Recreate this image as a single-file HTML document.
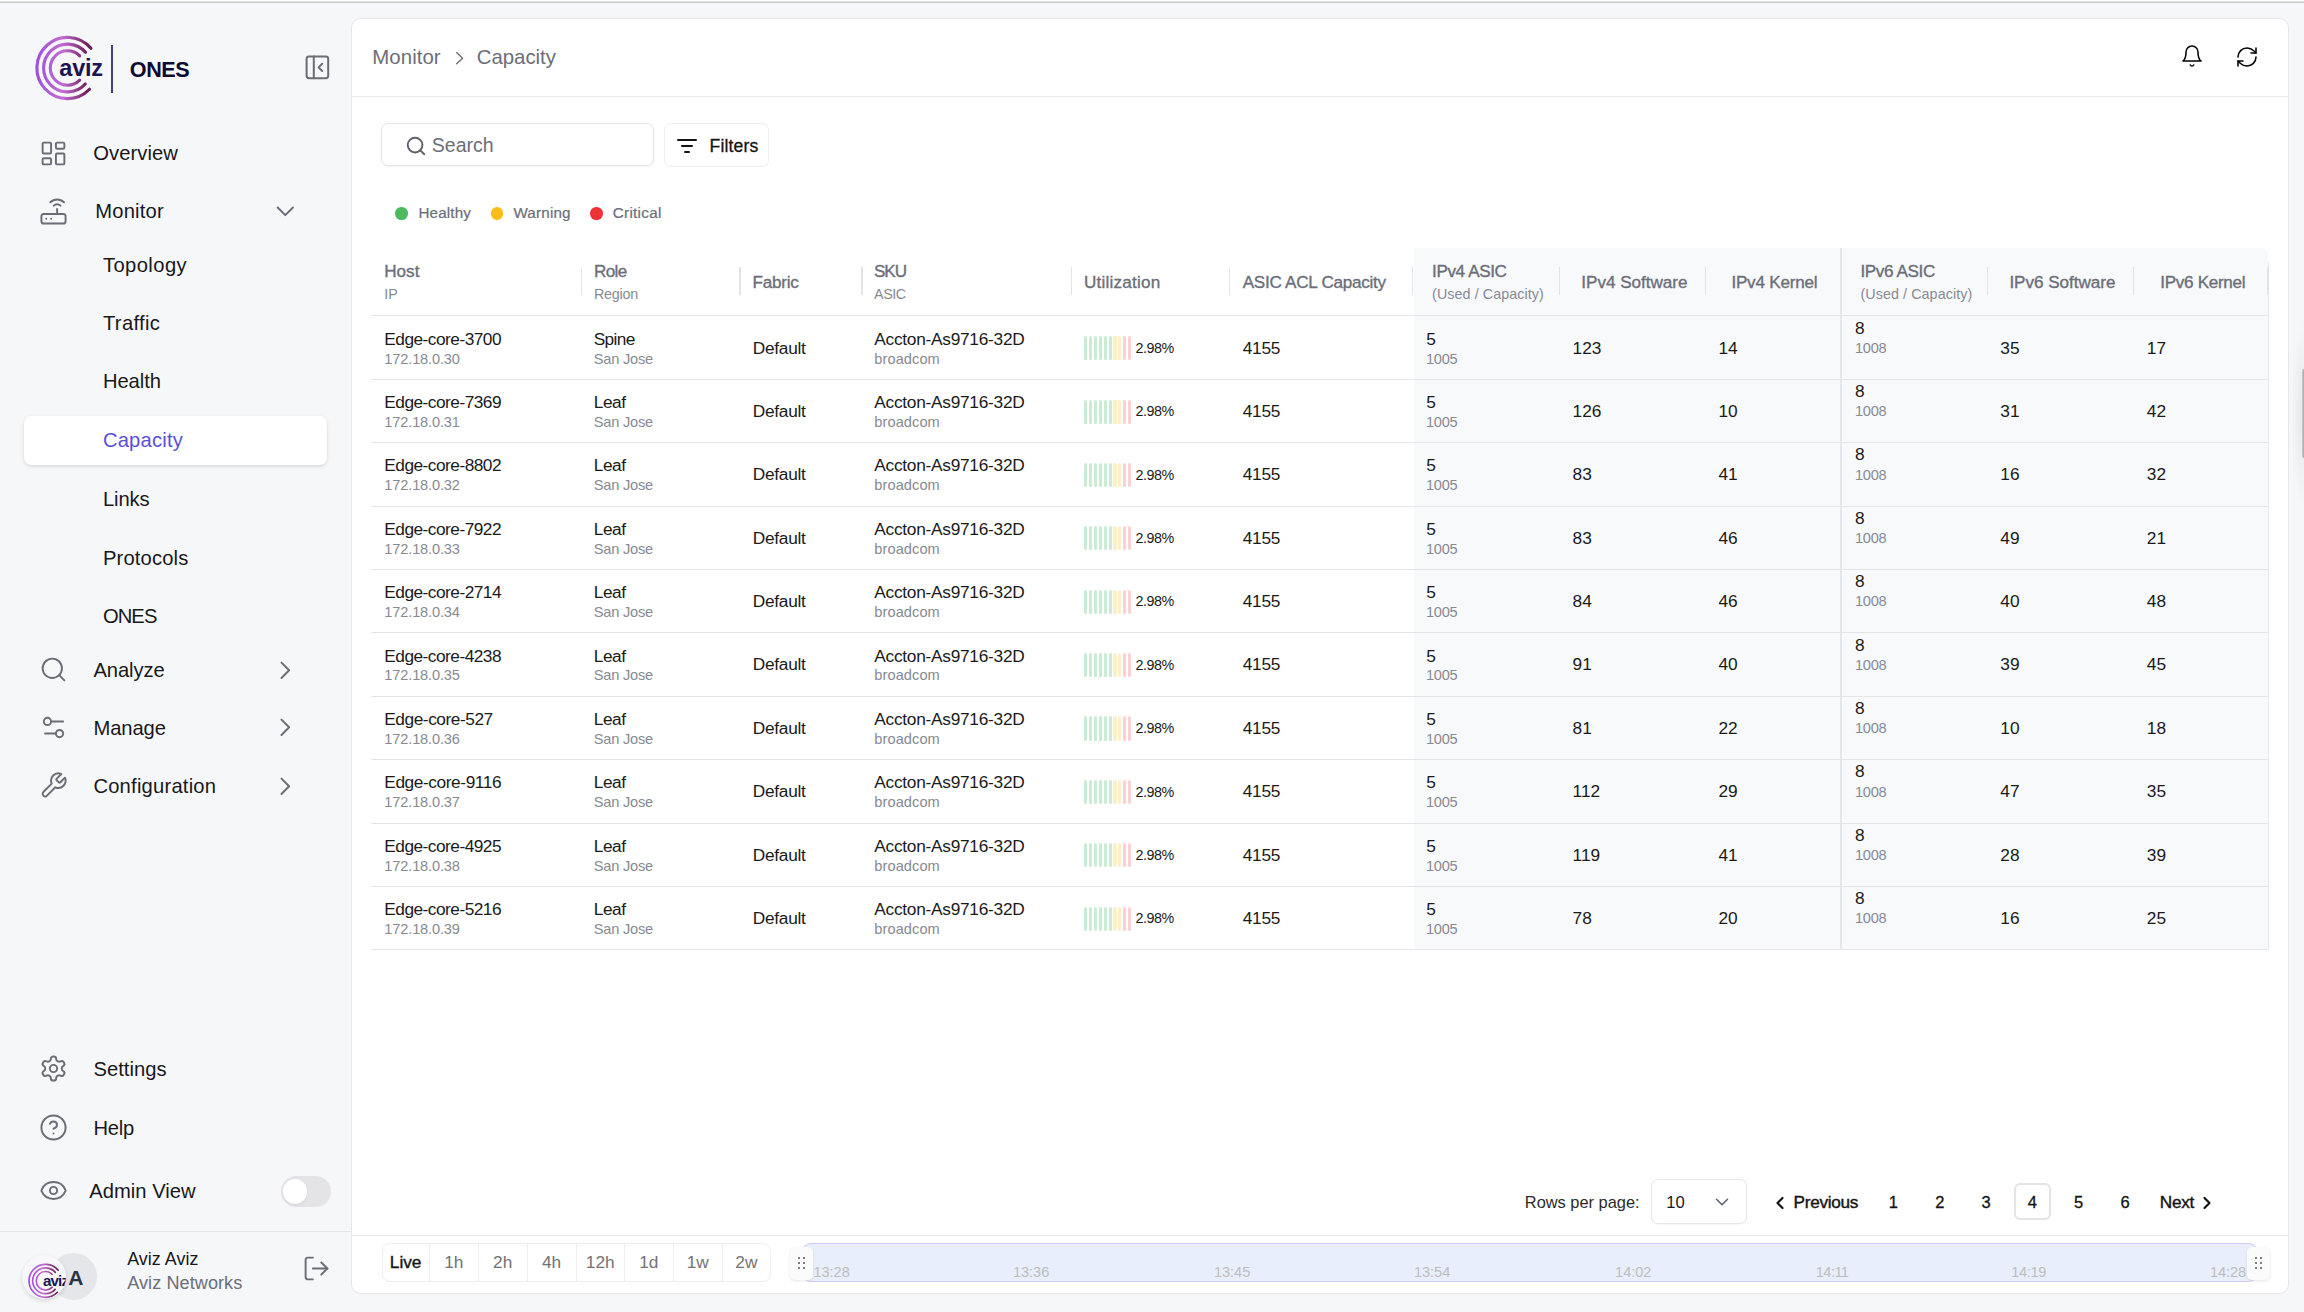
<!DOCTYPE html>
<html><head><meta charset="utf-8"><title>Monitor - Capacity</title>
<style>
html,body{margin:0;padding:0}
body{width:2304px;height:1312px;overflow:hidden;position:relative;background:#f6f7f9;font-family:"Liberation Sans", sans-serif}
.t{position:absolute;white-space:nowrap;line-height:1;font-family:"Liberation Sans", sans-serif}
</style></head><body>
<div style="position:absolute;left:0.00px;top:0.00px;width:2304.00px;height:1.00px;background:#fff"></div>
<div style="position:absolute;left:0.00px;top:1.00px;width:2304.00px;height:1.00px;background:#e4e5e5"></div>
<div style="position:absolute;left:0.00px;top:2.00px;width:2304.00px;height:1.00px;background:#c8cac9"></div>
<svg style="position:absolute;left:35px;top:35px;width:66px;height:66px;overflow:visible" viewBox="0 0 66 66"><defs><linearGradient id="lg1" x1="0" y1="0" x2="66" y2="0" gradientUnits="userSpaceOnUse"><stop offset="0" stop-color="#9a4ee2"/><stop offset="0.42" stop-color="#c36cd2"/><stop offset="0.78" stop-color="#72205f"/><stop offset="1" stop-color="#4a0c3a"/></linearGradient></defs><g fill="none" stroke="url(#lg1)" stroke-width="3.1" stroke-linecap="round"><path d="M55.94 13.33A30.6 30.6 0 1 0 54.51 54.26"/><path d="M50.54 17.32A23.9 23.9 0 1 0 50.26 48.99"/><path d="M44.66 20.84A17.2 17.2 0 1 0 44.66 45.16"/></g><text x="24.3" y="40.8" font-family="Liberation Sans, sans-serif" font-weight="700" font-size="23.5" letter-spacing="-0.2" fill="#1d1553">aviz</text></svg>
<div style="position:absolute;left:110.90px;top:45.00px;width:1.80px;height:48.00px;background:#433f80"></div>
<div class="t" style="left:129.8px;top:59px;font-size:21.6px;color:#0c0b30;font-weight:700;letter-spacing:-0.438px;">ONES</div>
<svg style="position:absolute;left:302.70px;top:53.40px;width:28.8px;height:28.8px" viewBox="0 0 24 24" fill="none" stroke="#6b6d76" stroke-width="1.67" stroke-linecap="round" stroke-linejoin="round"><rect width="18" height="18" x="3" y="3" rx="2"/><path d="M9 3v18"/><path d="m16 15-3-3 3-3"/></svg>
<svg style="position:absolute;left:39.00px;top:138.80px;width:29px;height:29px" viewBox="0 0 24 24" fill="none" stroke="#6b6d76" stroke-width="1.6" stroke-linecap="round" stroke-linejoin="round"><rect width="7" height="9" x="3" y="3" rx="1"/><rect width="7" height="5" x="14" y="3" rx="1"/><rect width="7" height="9" x="14" y="12" rx="1"/><rect width="7" height="5" x="3" y="16" rx="1"/></svg>
<div class="t" style="left:93.3px;top:143px;font-size:20.2px;color:#18181b;font-weight:400;letter-spacing:0.052px;">Overview</div>
<svg style="position:absolute;left:39.00px;top:196.50px;width:29px;height:29px" viewBox="0 0 24 24" fill="none" stroke="#6b6d76" stroke-width="1.6" stroke-linecap="round" stroke-linejoin="round"><rect width="20" height="8" x="2" y="14" rx="2"/><path d="M6.01 18H6"/><path d="M10.01 18H10"/><path d="M15 10v4"/><path d="M17.84 7.17a4 4 0 0 0-5.66 0"/><path d="M20.66 4.34a8 8 0 0 0-11.31 0"/></svg>
<div class="t" style="left:95.2px;top:201px;font-size:20.2px;color:#18181b;font-weight:400;letter-spacing:0.205px;">Monitor</div>
<svg style="position:absolute;left:269.70px;top:195.70px;width:30.6px;height:30.6px" viewBox="0 0 24 24" fill="none" stroke="#6b6d76" stroke-width="1.55" stroke-linecap="round" stroke-linejoin="round"><path d="m6 9 6 6 6-6"/></svg>
<div style="position:absolute;left:24.00px;top:416.00px;width:303.00px;height:49.00px;background:#fff;border-radius:7px;box-shadow:0 1px 3px rgba(0,0,0,0.10),0 2px 5px rgba(0,0,0,0.05)"></div>
<div class="t" style="left:102.9px;top:255px;font-size:20.2px;color:#18181b;font-weight:400;letter-spacing:0.420px;">Topology</div>
<div class="t" style="left:102.9px;top:313px;font-size:20.2px;color:#18181b;font-weight:400;letter-spacing:0.349px;">Traffic</div>
<div class="t" style="left:102.9px;top:371px;font-size:20.2px;color:#18181b;font-weight:400;letter-spacing:-0.060px;">Health</div>
<div class="t" style="left:102.9px;top:430px;font-size:20.2px;color:#5a4fd8;font-weight:400;letter-spacing:0.200px;">Capacity</div>
<div class="t" style="left:102.9px;top:489px;font-size:20.2px;color:#18181b;font-weight:400;letter-spacing:-0.112px;">Links</div>
<div class="t" style="left:102.9px;top:548px;font-size:20.2px;color:#18181b;font-weight:400;letter-spacing:0.151px;">Protocols</div>
<div class="t" style="left:102.9px;top:606px;font-size:20.2px;color:#18181b;font-weight:400;letter-spacing:-0.916px;">ONES</div>
<svg style="position:absolute;left:39.00px;top:655.30px;width:29px;height:29px" viewBox="0 0 24 24" fill="none" stroke="#6b6d76" stroke-width="1.6" stroke-linecap="round" stroke-linejoin="round"><circle cx="11" cy="11" r="8"/><path d="m21 21-4.3-4.3"/></svg>
<div class="t" style="left:93.4px;top:660px;font-size:20.2px;color:#18181b;font-weight:400;letter-spacing:-0.062px;">Analyze</div>
<svg style="position:absolute;left:269.70px;top:654.50px;width:30.6px;height:30.6px" viewBox="0 0 24 24" fill="none" stroke="#6b6d76" stroke-width="1.55" stroke-linecap="round" stroke-linejoin="round"><path d="m9 18 6-6-6-6"/></svg>
<svg style="position:absolute;left:39.00px;top:713.00px;width:29px;height:29px" viewBox="0 0 24 24" fill="none" stroke="#6b6d76" stroke-width="1.6" stroke-linecap="round" stroke-linejoin="round"><path d="M20 7h-9"/><path d="M14 17H5"/><circle cx="17" cy="17" r="3"/><circle cx="7" cy="7" r="3"/></svg>
<div class="t" style="left:93.4px;top:718px;font-size:20.2px;color:#18181b;font-weight:400;letter-spacing:-0.081px;">Manage</div>
<svg style="position:absolute;left:269.70px;top:712.20px;width:30.6px;height:30.6px" viewBox="0 0 24 24" fill="none" stroke="#6b6d76" stroke-width="1.55" stroke-linecap="round" stroke-linejoin="round"><path d="m9 18 6-6-6-6"/></svg>
<svg style="position:absolute;left:39.00px;top:771.30px;width:29px;height:29px" viewBox="0 0 24 24" fill="none" stroke="#6b6d76" stroke-width="1.6" stroke-linecap="round" stroke-linejoin="round"><path d="M14.7 6.3a1 1 0 0 0 0 1.4l1.6 1.6a1 1 0 0 0 1.4 0l3.77-3.77a6 6 0 0 1-7.94 7.94l-6.91 6.91a2.12 2.12 0 0 1-3-3l6.91-6.91a6 6 0 0 1 7.94-7.94l-3.76 3.76z"/></svg>
<div class="t" style="left:93.4px;top:776px;font-size:20.2px;color:#18181b;font-weight:400;letter-spacing:0.213px;">Configuration</div>
<svg style="position:absolute;left:269.70px;top:770.50px;width:30.6px;height:30.6px" viewBox="0 0 24 24" fill="none" stroke="#6b6d76" stroke-width="1.55" stroke-linecap="round" stroke-linejoin="round"><path d="m9 18 6-6-6-6"/></svg>
<svg style="position:absolute;left:39.00px;top:1054.40px;width:29px;height:29px" viewBox="0 0 24 24" fill="none" stroke="#6b6d76" stroke-width="1.6" stroke-linecap="round" stroke-linejoin="round"><path d="M12.22 2h-.44a2 2 0 0 0-2 2v.18a2 2 0 0 1-1 1.73l-.43.25a2 2 0 0 1-2 0l-.15-.08a2 2 0 0 0-2.73.73l-.22.38a2 2 0 0 0 .73 2.73l.15.1a2 2 0 0 1 1 1.72v.51a2 2 0 0 1-1 1.74l-.15.09a2 2 0 0 0-.73 2.73l.22.38a2 2 0 0 0 2.73.73l.15-.08a2 2 0 0 1 2 0l.43.25a2 2 0 0 1 1 1.73V20a2 2 0 0 0 2 2h.44a2 2 0 0 0 2-2v-.18a2 2 0 0 1 1-1.73l.43-.25a2 2 0 0 1 2 0l.15.08a2 2 0 0 0 2.73-.73l.22-.39a2 2 0 0 0-.73-2.73l-.15-.08a2 2 0 0 1-1-1.74v-.5a2 2 0 0 1 1-1.74l.15-.09a2 2 0 0 0 .73-2.73l-.22-.38a2 2 0 0 0-2.73-.73l-.15.08a2 2 0 0 1-2 0l-.43-.25a2 2 0 0 1-1-1.73V4a2 2 0 0 0-2-2z"/><circle cx="12" cy="12" r="3"/></svg>
<div class="t" style="left:93.5px;top:1059px;font-size:20.2px;color:#18181b;font-weight:400;letter-spacing:0.017px;">Settings</div>
<svg style="position:absolute;left:39.00px;top:1113.00px;width:29px;height:29px" viewBox="0 0 24 24" fill="none" stroke="#6b6d76" stroke-width="1.6" stroke-linecap="round" stroke-linejoin="round"><circle cx="12" cy="12" r="10"/><path d="M9.09 9a3 3 0 0 1 5.83 1c0 2-3 3-3 3"/><path d="M12 17h.01"/></svg>
<div class="t" style="left:93.5px;top:1118px;font-size:20.2px;color:#18181b;font-weight:400;letter-spacing:-0.250px;">Help</div>
<svg style="position:absolute;left:39.00px;top:1176.30px;width:29px;height:29px" viewBox="0 0 24 24" fill="none" stroke="#6b6d76" stroke-width="1.6" stroke-linecap="round" stroke-linejoin="round"><path d="M2.062 12.348a1 1 0 0 1 0-.696 10.75 10.75 0 0 1 19.876 0 1 1 0 0 1 0 .696 10.75 10.75 0 0 1-19.876 0"/><circle cx="12" cy="12" r="3"/></svg>
<div class="t" style="left:89.2px;top:1181px;font-size:20.2px;color:#18181b;font-weight:400;letter-spacing:0.027px;">Admin View</div>
<div style="position:absolute;left:280.70px;top:1176.20px;width:50.80px;height:30.70px;border-radius:16px;background:#e4e4e7"></div>
<div style="position:absolute;left:282.60px;top:1179.00px;width:24.60px;height:24.60px;border-radius:50%;background:#fff;box-shadow:0 1px 2px rgba(0,0,0,0.08)"></div>
<div style="position:absolute;left:0.00px;top:1231.00px;width:351.00px;height:1.00px;background:#e4e5e9"></div>
<div style="position:absolute;left:50.00px;top:1252.80px;width:47.00px;height:47.00px;border-radius:50%;background:#e5e6ea"></div>
<div class="t" style="left:68.2px;top:1267px;font-size:21px;color:#2b3444;font-weight:700;letter-spacing:-0.362px;">A</div>
<div style="position:absolute;left:21.8px;top:1254.5px;width:44px;height:44px;border-radius:50%;background:#f7f7f9;box-shadow:0 2px 4px rgba(0,0,0,0.12);overflow:hidden"><svg style="position:absolute;left:6.4px;top:8.6px;width:35.6px;height:35.6px;overflow:visible" viewBox="0 0 66 66"><defs><linearGradient id="lg2" x1="0" y1="0" x2="66" y2="0" gradientUnits="userSpaceOnUse"><stop offset="0" stop-color="#9a4ee2"/><stop offset="0.42" stop-color="#c36cd2"/><stop offset="0.78" stop-color="#72205f"/><stop offset="1" stop-color="#4a0c3a"/></linearGradient></defs><g fill="none" stroke="url(#lg2)" stroke-width="3.1" stroke-linecap="round"><path d="M55.94 13.33A30.6 30.6 0 1 0 54.51 54.26"/><path d="M50.54 17.32A23.9 23.9 0 1 0 50.26 48.99"/><path d="M44.66 20.84A17.2 17.2 0 1 0 44.66 45.16"/></g></svg><svg style="position:absolute;left:0;top:0;width:44px;height:44px" viewBox="0 0 44 44"><text x="21.0" y="31.1" font-family="Liberation Sans, sans-serif" font-weight="700" font-size="15.2" letter-spacing="-0.9" fill="#1d1553">aviz</text></svg></div>
<div class="t" style="left:127.2px;top:1251px;font-size:17.9px;color:#18181b;font-weight:400;letter-spacing:0.041px;">Aviz Aviz</div>
<div class="t" style="left:127.2px;top:1274px;font-size:18.1px;color:#6b6e78;font-weight:400;letter-spacing:0.065px;">Aviz Networks</div>
<svg style="position:absolute;left:302.10px;top:1254.10px;width:29px;height:29px" viewBox="0 0 24 24" fill="none" stroke="#6b6d76" stroke-width="1.6" stroke-linecap="round" stroke-linejoin="round"><path d="M9 21H5a2 2 0 0 1-2-2V5a2 2 0 0 1 2-2h4"/><path d="m16 17 5-5-5-5"/><path d="M21 12H9"/></svg>
<div style="position:absolute;left:351.00px;top:17.50px;width:1938.00px;height:1276.50px;box-sizing:border-box;background:#fff;border:1px solid #e6e7eb;border-radius:10px"></div>
<div style="position:absolute;left:2290.00px;top:320.00px;width:14.00px;height:190.00px;background:radial-gradient(ellipse 14px 95px at 100% 50%, rgba(0,0,0,0.07), rgba(0,0,0,0))"></div>
<div style="position:absolute;left:2301.50px;top:369.00px;width:2.50px;height:89.00px;background:linear-gradient(to right,#cfcfd2,#a6a6aa);border-radius:2px 0 0 2px"></div>
<div class="t" style="left:372.3px;top:47px;font-size:20.4px;color:#6b6e78;font-weight:400;letter-spacing:0.061px;">Monitor</div>
<svg style="position:absolute;left:450px;top:46px;width:20px;height:24px" viewBox="0 0 20 24" fill="none" stroke="#6b6e78" stroke-width="1.35" stroke-linecap="round" stroke-linejoin="round"><path d="M6.6 6.6 12.6 12.2 6.6 17.8"/></svg>
<div class="t" style="left:476.7px;top:47px;font-size:20.4px;color:#6b6e78;font-weight:400;letter-spacing:-0.011px;">Capacity</div>
<div style="position:absolute;left:352.00px;top:96.00px;width:1936.00px;height:1.00px;background:#e8e9ed"></div>
<svg style="position:absolute;left:2180.40px;top:44.00px;width:24px;height:24px" viewBox="0 0 24 24" fill="none" stroke="#000" stroke-width="1.55" stroke-linecap="round" stroke-linejoin="round"><path d="M6 8a6 6 0 0 1 12 0c0 7 3 9 3 9H3s3-2 3-9"/><path d="M10.3 21a1.94 1.94 0 0 0 3.4 0"/></svg>
<svg style="position:absolute;left:2234.50px;top:44.50px;width:24px;height:24px" viewBox="0 0 24 24" fill="none" stroke="#000" stroke-width="1.55" stroke-linecap="round" stroke-linejoin="round"><path d="M3 12a9 9 0 0 1 9-9 9.75 9.75 0 0 1 6.74 2.74L21 8"/><path d="M21 3v5h-5"/><path d="M21 12a9 9 0 0 1-9 9 9.75 9.75 0 0 1-6.74-2.74L3 16"/><path d="M8 16H3v5"/></svg>
<div style="position:absolute;left:381.30px;top:123.30px;width:273.00px;height:43.00px;box-sizing:border-box;border:1px solid #e4e5e8;border-radius:7px;background:#fff;box-shadow:0 1px 2px rgba(0,0,0,0.05)"></div>
<svg style="position:absolute;left:405.10px;top:134.70px;width:22px;height:22px" viewBox="0 0 24 24" fill="none" stroke="#5f616b" stroke-width="2.1" stroke-linecap="round" stroke-linejoin="round"><circle cx="11" cy="11" r="8"/><path d="m21 21-4.3-4.3"/></svg>
<div class="t" style="left:431.8px;top:136px;font-size:19.5px;color:#6b6e78;font-weight:400;letter-spacing:0.005px;">Search</div>
<div style="position:absolute;left:664.00px;top:122.80px;width:105.00px;height:44.60px;box-sizing:border-box;border:1px solid #eceef0;border-radius:7px;background:#fff"></div>
<svg style="position:absolute;left:674.50px;top:133.50px;width:24px;height:24px" viewBox="0 0 24 24" fill="none" stroke="#141414" stroke-width="2.0" stroke-linecap="round" stroke-linejoin="round"><path d="M3 6h18"/><path d="M7 12h10"/><path d="M10 18h4"/></svg>
<div class="t" style="left:709.6px;top:138px;font-size:17.6px;color:#141414;font-weight:400;-webkit-text-stroke:0.3px #141414;letter-spacing:0.115px;">Filters</div>
<div style="position:absolute;left:395.10px;top:207.00px;width:12.60px;height:12.60px;border-radius:50%;background:#4cbb5f"></div>
<div class="t" style="left:418.4px;top:205px;font-size:15.2px;color:#6b6e78;font-weight:400;-webkit-text-stroke:0.2px #6b6e78;letter-spacing:0.176px;">Healthy</div>
<div style="position:absolute;left:490.50px;top:207.00px;width:12.60px;height:12.60px;border-radius:50%;background:#fcbc15"></div>
<div class="t" style="left:513.4px;top:205px;font-size:15.2px;color:#6b6e78;font-weight:400;-webkit-text-stroke:0.2px #6b6e78;letter-spacing:0.193px;">Warning</div>
<div style="position:absolute;left:590.20px;top:207.00px;width:12.60px;height:12.60px;border-radius:50%;background:#ee3236"></div>
<div class="t" style="left:612.8px;top:205px;font-size:15.2px;color:#6b6e78;font-weight:400;-webkit-text-stroke:0.2px #6b6e78;letter-spacing:0.293px;">Critical</div>
<div style="position:absolute;left:1413.50px;top:248.00px;width:426.50px;height:702.00px;background:#f8f9fb"></div>
<div style="position:absolute;left:1841.00px;top:248.00px;width:427.40px;height:702.00px;background:#f8f9fb;border-top-right-radius:6px"></div>
<div style="position:absolute;left:371.00px;top:315.00px;width:1897.40px;height:1.00px;background:#e4e5e8"></div>
<div style="position:absolute;left:371.00px;top:379.00px;width:1897.40px;height:1.00px;background:#e4e5e8"></div>
<div style="position:absolute;left:371.00px;top:442.00px;width:1897.40px;height:1.00px;background:#e4e5e8"></div>
<div style="position:absolute;left:371.00px;top:506.00px;width:1897.40px;height:1.00px;background:#e4e5e8"></div>
<div style="position:absolute;left:371.00px;top:569.00px;width:1897.40px;height:1.00px;background:#e4e5e8"></div>
<div style="position:absolute;left:371.00px;top:632.00px;width:1897.40px;height:1.00px;background:#e4e5e8"></div>
<div style="position:absolute;left:371.00px;top:696.00px;width:1897.40px;height:1.00px;background:#e4e5e8"></div>
<div style="position:absolute;left:371.00px;top:759.00px;width:1897.40px;height:1.00px;background:#e4e5e8"></div>
<div style="position:absolute;left:371.00px;top:823.00px;width:1897.40px;height:1.00px;background:#e4e5e8"></div>
<div style="position:absolute;left:371.00px;top:886.00px;width:1897.40px;height:1.00px;background:#e4e5e8"></div>
<div style="position:absolute;left:371.00px;top:949.00px;width:1897.40px;height:1.00px;background:#e4e5e8"></div>
<div style="position:absolute;left:1839.80px;top:248.00px;width:1.80px;height:702.00px;background:#e6e7ea"></div>
<div style="position:absolute;left:2267.60px;top:262.00px;width:1.00px;height:688.00px;background:#e9eaed"></div>
<div style="position:absolute;left:580.80px;top:267.00px;width:1.30px;height:28.00px;background:#e3e4e8"></div>
<div style="position:absolute;left:739.40px;top:267.00px;width:1.30px;height:28.00px;background:#e3e4e8"></div>
<div style="position:absolute;left:861.40px;top:267.00px;width:1.30px;height:28.00px;background:#e3e4e8"></div>
<div style="position:absolute;left:1070.90px;top:267.00px;width:1.30px;height:28.00px;background:#e3e4e8"></div>
<div style="position:absolute;left:1229.20px;top:267.00px;width:1.30px;height:28.00px;background:#e3e4e8"></div>
<div style="position:absolute;left:1412.20px;top:267.00px;width:1.30px;height:28.00px;background:#e3e4e8"></div>
<div style="position:absolute;left:1558.50px;top:267.00px;width:1.30px;height:28.00px;background:#e3e4e8"></div>
<div style="position:absolute;left:1704.80px;top:267.00px;width:1.30px;height:28.00px;background:#e3e4e8"></div>
<div style="position:absolute;left:1986.70px;top:267.00px;width:1.30px;height:28.00px;background:#e3e4e8"></div>
<div style="position:absolute;left:2132.80px;top:267.00px;width:1.30px;height:28.00px;background:#e3e4e8"></div>
<div style="position:absolute;left:2267.30px;top:267.00px;width:1.30px;height:28.00px;background:#e3e4e8"></div>
<div class="t" style="left:384.3px;top:263px;font-size:17.1px;color:#6b6e78;font-weight:400;-webkit-text-stroke:0.35px #6b6e78;letter-spacing:-0.019px;">Host</div>
<div class="t" style="left:384.3px;top:287px;font-size:14.3px;color:#878a93;font-weight:400;">IP</div>
<div class="t" style="left:593.9px;top:263px;font-size:17.1px;color:#6b6e78;font-weight:400;-webkit-text-stroke:0.35px #6b6e78;letter-spacing:-0.592px;">Role</div>
<div class="t" style="left:593.9px;top:287px;font-size:14.3px;color:#878a93;font-weight:400;letter-spacing:-0.203px;">Region</div>
<div class="t" style="left:752.5px;top:274px;font-size:17.1px;color:#6b6e78;font-weight:400;-webkit-text-stroke:0.35px #6b6e78;letter-spacing:-0.241px;">Fabric</div>
<div class="t" style="left:874.0px;top:263px;font-size:17.1px;color:#6b6e78;font-weight:400;-webkit-text-stroke:0.35px #6b6e78;letter-spacing:-1.079px;">SKU</div>
<div class="t" style="left:874.0px;top:287px;font-size:14.3px;color:#878a93;font-weight:400;letter-spacing:-0.392px;">ASIC</div>
<div class="t" style="left:1084.0px;top:274px;font-size:17.1px;color:#6b6e78;font-weight:400;-webkit-text-stroke:0.35px #6b6e78;letter-spacing:0.217px;">Utilization</div>
<div class="t" style="left:1242.7px;top:274px;font-size:17.1px;color:#6b6e78;font-weight:400;-webkit-text-stroke:0.35px #6b6e78;letter-spacing:-0.258px;">ASIC ACL Capacity</div>
<div class="t" style="left:1432.1px;top:263px;font-size:17.1px;color:#6b6e78;font-weight:400;-webkit-text-stroke:0.35px #6b6e78;letter-spacing:-0.393px;">IPv4 ASIC</div>
<div class="t" style="left:1432.1px;top:287px;font-size:14.3px;color:#878a93;font-weight:400;letter-spacing:0.077px;">(Used / Capacity)</div>
<div class="t" style="left:1581.3px;top:274px;font-size:17.1px;color:#6b6e78;font-weight:400;-webkit-text-stroke:0.35px #6b6e78;letter-spacing:-0.021px;">IPv4 Software</div>
<div class="t" style="left:1731.4px;top:274px;font-size:17.1px;color:#6b6e78;font-weight:400;-webkit-text-stroke:0.35px #6b6e78;letter-spacing:-0.219px;">IPv4 Kernel</div>
<div class="t" style="left:1860.5px;top:263px;font-size:17.1px;color:#6b6e78;font-weight:400;-webkit-text-stroke:0.35px #6b6e78;letter-spacing:-0.393px;">IPv6 ASIC</div>
<div class="t" style="left:1860.5px;top:287px;font-size:14.3px;color:#878a93;font-weight:400;letter-spacing:0.077px;">(Used / Capacity)</div>
<div class="t" style="left:2009.4px;top:274px;font-size:17.1px;color:#6b6e78;font-weight:400;-webkit-text-stroke:0.35px #6b6e78;letter-spacing:-0.029px;">IPv6 Software</div>
<div class="t" style="left:2160.2px;top:274px;font-size:17.1px;color:#6b6e78;font-weight:400;-webkit-text-stroke:0.35px #6b6e78;letter-spacing:-0.299px;">IPv6 Kernel</div>
<div class="t" style="left:384.3px;top:331px;font-size:17.3px;color:#1a1a1a;font-weight:400;letter-spacing:-0.512px;">Edge-core-3700</div>
<div class="t" style="left:384.3px;top:352px;font-size:14.6px;color:#878a93;font-weight:400;letter-spacing:-0.143px;">172.18.0.30</div>
<div class="t" style="left:593.7px;top:331px;font-size:17.3px;color:#1a1a1a;font-weight:400;letter-spacing:-0.613px;">Spine</div>
<div class="t" style="left:593.7px;top:352px;font-size:14.6px;color:#878a93;font-weight:400;letter-spacing:-0.195px;">San Jose</div>
<div class="t" style="left:752.8px;top:340px;font-size:17.3px;color:#1a1a1a;font-weight:400;letter-spacing:-0.284px;">Default</div>
<div class="t" style="left:874.3px;top:331px;font-size:17.3px;color:#1a1a1a;font-weight:400;letter-spacing:-0.264px;">Accton-As9716-32D</div>
<div class="t" style="left:874.3px;top:352px;font-size:14.6px;color:#878a93;font-weight:400;letter-spacing:0.082px;">broadcom</div>
<div style="position:absolute;left:1084.10px;top:336.20px;width:3.20px;height:24.10px;border-radius:1.6px;background:#c9ecd3"></div>
<div style="position:absolute;left:1088.98px;top:336.20px;width:3.20px;height:24.10px;border-radius:1.6px;background:#c9ecd3"></div>
<div style="position:absolute;left:1093.86px;top:336.20px;width:3.20px;height:24.10px;border-radius:1.6px;background:#c9ecd3"></div>
<div style="position:absolute;left:1098.74px;top:336.20px;width:3.20px;height:24.10px;border-radius:1.6px;background:#c9ecd3"></div>
<div style="position:absolute;left:1103.62px;top:336.20px;width:3.20px;height:24.10px;border-radius:1.6px;background:#c9ecd3"></div>
<div style="position:absolute;left:1108.50px;top:336.20px;width:3.20px;height:24.10px;border-radius:1.6px;background:#c9ecd3"></div>
<div style="position:absolute;left:1113.38px;top:336.20px;width:3.20px;height:24.10px;border-radius:1.6px;background:#fdf0c8"></div>
<div style="position:absolute;left:1118.26px;top:336.20px;width:3.20px;height:24.10px;border-radius:1.6px;background:#fdf0c8"></div>
<div style="position:absolute;left:1123.14px;top:336.20px;width:3.20px;height:24.10px;border-radius:1.6px;background:#fdd1d4"></div>
<div style="position:absolute;left:1128.02px;top:336.20px;width:3.20px;height:24.10px;border-radius:1.6px;background:#fdd1d4"></div>
<div class="t" style="left:1135.4px;top:341px;font-size:14.3px;color:#1a1a1a;font-weight:400;letter-spacing:-0.460px;">2.98%</div>
<div class="t" style="left:1242.7px;top:340px;font-size:17.3px;color:#1a1a1a;font-weight:400;letter-spacing:-0.264px;">4155</div>
<div class="t" style="left:1426.3px;top:331px;font-size:17.3px;color:#1a1a1a;font-weight:400;">5</div>
<div class="t" style="left:1425.9px;top:352px;font-size:14.6px;color:#878a93;font-weight:400;letter-spacing:-0.228px;">1005</div>
<div class="t" style="left:1572.6px;top:340px;font-size:17.3px;color:#1a1a1a;font-weight:400;">123</div>
<div class="t" style="left:1718.4px;top:340px;font-size:17.3px;color:#1a1a1a;font-weight:400;">14</div>
<div class="t" style="left:1854.9px;top:320px;font-size:17.3px;color:#1a1a1a;font-weight:400;">8</div>
<div class="t" style="left:1854.9px;top:341px;font-size:14.6px;color:#878a93;font-weight:400;letter-spacing:-0.228px;">1008</div>
<div class="t" style="left:2000.3px;top:340px;font-size:17.3px;color:#1a1a1a;font-weight:400;">35</div>
<div class="t" style="left:2146.8px;top:340px;font-size:17.3px;color:#1a1a1a;font-weight:400;">17</div>
<div class="t" style="left:384.3px;top:394px;font-size:17.3px;color:#1a1a1a;font-weight:400;letter-spacing:-0.512px;">Edge-core-7369</div>
<div class="t" style="left:384.3px;top:415px;font-size:14.6px;color:#878a93;font-weight:400;letter-spacing:-0.143px;">172.18.0.31</div>
<div class="t" style="left:593.7px;top:394px;font-size:17.3px;color:#1a1a1a;font-weight:400;letter-spacing:-0.400px;">Leaf</div>
<div class="t" style="left:593.7px;top:415px;font-size:14.6px;color:#878a93;font-weight:400;letter-spacing:-0.195px;">San Jose</div>
<div class="t" style="left:752.8px;top:403px;font-size:17.3px;color:#1a1a1a;font-weight:400;letter-spacing:-0.284px;">Default</div>
<div class="t" style="left:874.3px;top:394px;font-size:17.3px;color:#1a1a1a;font-weight:400;letter-spacing:-0.264px;">Accton-As9716-32D</div>
<div class="t" style="left:874.3px;top:415px;font-size:14.6px;color:#878a93;font-weight:400;letter-spacing:0.082px;">broadcom</div>
<div style="position:absolute;left:1084.10px;top:399.58px;width:3.20px;height:24.10px;border-radius:1.6px;background:#c9ecd3"></div>
<div style="position:absolute;left:1088.98px;top:399.58px;width:3.20px;height:24.10px;border-radius:1.6px;background:#c9ecd3"></div>
<div style="position:absolute;left:1093.86px;top:399.58px;width:3.20px;height:24.10px;border-radius:1.6px;background:#c9ecd3"></div>
<div style="position:absolute;left:1098.74px;top:399.58px;width:3.20px;height:24.10px;border-radius:1.6px;background:#c9ecd3"></div>
<div style="position:absolute;left:1103.62px;top:399.58px;width:3.20px;height:24.10px;border-radius:1.6px;background:#c9ecd3"></div>
<div style="position:absolute;left:1108.50px;top:399.58px;width:3.20px;height:24.10px;border-radius:1.6px;background:#c9ecd3"></div>
<div style="position:absolute;left:1113.38px;top:399.58px;width:3.20px;height:24.10px;border-radius:1.6px;background:#fdf0c8"></div>
<div style="position:absolute;left:1118.26px;top:399.58px;width:3.20px;height:24.10px;border-radius:1.6px;background:#fdf0c8"></div>
<div style="position:absolute;left:1123.14px;top:399.58px;width:3.20px;height:24.10px;border-radius:1.6px;background:#fdd1d4"></div>
<div style="position:absolute;left:1128.02px;top:399.58px;width:3.20px;height:24.10px;border-radius:1.6px;background:#fdd1d4"></div>
<div class="t" style="left:1135.4px;top:404px;font-size:14.3px;color:#1a1a1a;font-weight:400;letter-spacing:-0.460px;">2.98%</div>
<div class="t" style="left:1242.7px;top:403px;font-size:17.3px;color:#1a1a1a;font-weight:400;letter-spacing:-0.264px;">4155</div>
<div class="t" style="left:1426.3px;top:394px;font-size:17.3px;color:#1a1a1a;font-weight:400;">5</div>
<div class="t" style="left:1425.9px;top:415px;font-size:14.6px;color:#878a93;font-weight:400;letter-spacing:-0.228px;">1005</div>
<div class="t" style="left:1572.6px;top:403px;font-size:17.3px;color:#1a1a1a;font-weight:400;">126</div>
<div class="t" style="left:1718.4px;top:403px;font-size:17.3px;color:#1a1a1a;font-weight:400;">10</div>
<div class="t" style="left:1854.9px;top:383px;font-size:17.3px;color:#1a1a1a;font-weight:400;">8</div>
<div class="t" style="left:1854.9px;top:404px;font-size:14.6px;color:#878a93;font-weight:400;letter-spacing:-0.228px;">1008</div>
<div class="t" style="left:2000.3px;top:403px;font-size:17.3px;color:#1a1a1a;font-weight:400;">31</div>
<div class="t" style="left:2146.8px;top:403px;font-size:17.3px;color:#1a1a1a;font-weight:400;">42</div>
<div class="t" style="left:384.3px;top:457px;font-size:17.3px;color:#1a1a1a;font-weight:400;letter-spacing:-0.512px;">Edge-core-8802</div>
<div class="t" style="left:384.3px;top:478px;font-size:14.6px;color:#878a93;font-weight:400;letter-spacing:-0.143px;">172.18.0.32</div>
<div class="t" style="left:593.7px;top:457px;font-size:17.3px;color:#1a1a1a;font-weight:400;letter-spacing:-0.400px;">Leaf</div>
<div class="t" style="left:593.7px;top:478px;font-size:14.6px;color:#878a93;font-weight:400;letter-spacing:-0.195px;">San Jose</div>
<div class="t" style="left:752.8px;top:466px;font-size:17.3px;color:#1a1a1a;font-weight:400;letter-spacing:-0.284px;">Default</div>
<div class="t" style="left:874.3px;top:457px;font-size:17.3px;color:#1a1a1a;font-weight:400;letter-spacing:-0.264px;">Accton-As9716-32D</div>
<div class="t" style="left:874.3px;top:478px;font-size:14.6px;color:#878a93;font-weight:400;letter-spacing:0.082px;">broadcom</div>
<div style="position:absolute;left:1084.10px;top:462.96px;width:3.20px;height:24.10px;border-radius:1.6px;background:#c9ecd3"></div>
<div style="position:absolute;left:1088.98px;top:462.96px;width:3.20px;height:24.10px;border-radius:1.6px;background:#c9ecd3"></div>
<div style="position:absolute;left:1093.86px;top:462.96px;width:3.20px;height:24.10px;border-radius:1.6px;background:#c9ecd3"></div>
<div style="position:absolute;left:1098.74px;top:462.96px;width:3.20px;height:24.10px;border-radius:1.6px;background:#c9ecd3"></div>
<div style="position:absolute;left:1103.62px;top:462.96px;width:3.20px;height:24.10px;border-radius:1.6px;background:#c9ecd3"></div>
<div style="position:absolute;left:1108.50px;top:462.96px;width:3.20px;height:24.10px;border-radius:1.6px;background:#c9ecd3"></div>
<div style="position:absolute;left:1113.38px;top:462.96px;width:3.20px;height:24.10px;border-radius:1.6px;background:#fdf0c8"></div>
<div style="position:absolute;left:1118.26px;top:462.96px;width:3.20px;height:24.10px;border-radius:1.6px;background:#fdf0c8"></div>
<div style="position:absolute;left:1123.14px;top:462.96px;width:3.20px;height:24.10px;border-radius:1.6px;background:#fdd1d4"></div>
<div style="position:absolute;left:1128.02px;top:462.96px;width:3.20px;height:24.10px;border-radius:1.6px;background:#fdd1d4"></div>
<div class="t" style="left:1135.4px;top:468px;font-size:14.3px;color:#1a1a1a;font-weight:400;letter-spacing:-0.460px;">2.98%</div>
<div class="t" style="left:1242.7px;top:466px;font-size:17.3px;color:#1a1a1a;font-weight:400;letter-spacing:-0.264px;">4155</div>
<div class="t" style="left:1426.3px;top:457px;font-size:17.3px;color:#1a1a1a;font-weight:400;">5</div>
<div class="t" style="left:1425.9px;top:478px;font-size:14.6px;color:#878a93;font-weight:400;letter-spacing:-0.228px;">1005</div>
<div class="t" style="left:1572.6px;top:466px;font-size:17.3px;color:#1a1a1a;font-weight:400;">83</div>
<div class="t" style="left:1718.4px;top:466px;font-size:17.3px;color:#1a1a1a;font-weight:400;">41</div>
<div class="t" style="left:1854.9px;top:446px;font-size:17.3px;color:#1a1a1a;font-weight:400;">8</div>
<div class="t" style="left:1854.9px;top:468px;font-size:14.6px;color:#878a93;font-weight:400;letter-spacing:-0.228px;">1008</div>
<div class="t" style="left:2000.3px;top:466px;font-size:17.3px;color:#1a1a1a;font-weight:400;">16</div>
<div class="t" style="left:2146.8px;top:466px;font-size:17.3px;color:#1a1a1a;font-weight:400;">32</div>
<div class="t" style="left:384.3px;top:521px;font-size:17.3px;color:#1a1a1a;font-weight:400;letter-spacing:-0.512px;">Edge-core-7922</div>
<div class="t" style="left:384.3px;top:542px;font-size:14.6px;color:#878a93;font-weight:400;letter-spacing:-0.143px;">172.18.0.33</div>
<div class="t" style="left:593.7px;top:521px;font-size:17.3px;color:#1a1a1a;font-weight:400;letter-spacing:-0.400px;">Leaf</div>
<div class="t" style="left:593.7px;top:542px;font-size:14.6px;color:#878a93;font-weight:400;letter-spacing:-0.195px;">San Jose</div>
<div class="t" style="left:752.8px;top:530px;font-size:17.3px;color:#1a1a1a;font-weight:400;letter-spacing:-0.284px;">Default</div>
<div class="t" style="left:874.3px;top:521px;font-size:17.3px;color:#1a1a1a;font-weight:400;letter-spacing:-0.264px;">Accton-As9716-32D</div>
<div class="t" style="left:874.3px;top:542px;font-size:14.6px;color:#878a93;font-weight:400;letter-spacing:0.082px;">broadcom</div>
<div style="position:absolute;left:1084.10px;top:526.34px;width:3.20px;height:24.10px;border-radius:1.6px;background:#c9ecd3"></div>
<div style="position:absolute;left:1088.98px;top:526.34px;width:3.20px;height:24.10px;border-radius:1.6px;background:#c9ecd3"></div>
<div style="position:absolute;left:1093.86px;top:526.34px;width:3.20px;height:24.10px;border-radius:1.6px;background:#c9ecd3"></div>
<div style="position:absolute;left:1098.74px;top:526.34px;width:3.20px;height:24.10px;border-radius:1.6px;background:#c9ecd3"></div>
<div style="position:absolute;left:1103.62px;top:526.34px;width:3.20px;height:24.10px;border-radius:1.6px;background:#c9ecd3"></div>
<div style="position:absolute;left:1108.50px;top:526.34px;width:3.20px;height:24.10px;border-radius:1.6px;background:#c9ecd3"></div>
<div style="position:absolute;left:1113.38px;top:526.34px;width:3.20px;height:24.10px;border-radius:1.6px;background:#fdf0c8"></div>
<div style="position:absolute;left:1118.26px;top:526.34px;width:3.20px;height:24.10px;border-radius:1.6px;background:#fdf0c8"></div>
<div style="position:absolute;left:1123.14px;top:526.34px;width:3.20px;height:24.10px;border-radius:1.6px;background:#fdd1d4"></div>
<div style="position:absolute;left:1128.02px;top:526.34px;width:3.20px;height:24.10px;border-radius:1.6px;background:#fdd1d4"></div>
<div class="t" style="left:1135.4px;top:531px;font-size:14.3px;color:#1a1a1a;font-weight:400;letter-spacing:-0.460px;">2.98%</div>
<div class="t" style="left:1242.7px;top:530px;font-size:17.3px;color:#1a1a1a;font-weight:400;letter-spacing:-0.264px;">4155</div>
<div class="t" style="left:1426.3px;top:521px;font-size:17.3px;color:#1a1a1a;font-weight:400;">5</div>
<div class="t" style="left:1425.9px;top:542px;font-size:14.6px;color:#878a93;font-weight:400;letter-spacing:-0.228px;">1005</div>
<div class="t" style="left:1572.6px;top:530px;font-size:17.3px;color:#1a1a1a;font-weight:400;">83</div>
<div class="t" style="left:1718.4px;top:530px;font-size:17.3px;color:#1a1a1a;font-weight:400;">46</div>
<div class="t" style="left:1854.9px;top:510px;font-size:17.3px;color:#1a1a1a;font-weight:400;">8</div>
<div class="t" style="left:1854.9px;top:531px;font-size:14.6px;color:#878a93;font-weight:400;letter-spacing:-0.228px;">1008</div>
<div class="t" style="left:2000.3px;top:530px;font-size:17.3px;color:#1a1a1a;font-weight:400;">49</div>
<div class="t" style="left:2146.8px;top:530px;font-size:17.3px;color:#1a1a1a;font-weight:400;">21</div>
<div class="t" style="left:384.3px;top:584px;font-size:17.3px;color:#1a1a1a;font-weight:400;letter-spacing:-0.512px;">Edge-core-2714</div>
<div class="t" style="left:384.3px;top:605px;font-size:14.6px;color:#878a93;font-weight:400;letter-spacing:-0.143px;">172.18.0.34</div>
<div class="t" style="left:593.7px;top:584px;font-size:17.3px;color:#1a1a1a;font-weight:400;letter-spacing:-0.400px;">Leaf</div>
<div class="t" style="left:593.7px;top:605px;font-size:14.6px;color:#878a93;font-weight:400;letter-spacing:-0.195px;">San Jose</div>
<div class="t" style="left:752.8px;top:593px;font-size:17.3px;color:#1a1a1a;font-weight:400;letter-spacing:-0.284px;">Default</div>
<div class="t" style="left:874.3px;top:584px;font-size:17.3px;color:#1a1a1a;font-weight:400;letter-spacing:-0.264px;">Accton-As9716-32D</div>
<div class="t" style="left:874.3px;top:605px;font-size:14.6px;color:#878a93;font-weight:400;letter-spacing:0.082px;">broadcom</div>
<div style="position:absolute;left:1084.10px;top:589.72px;width:3.20px;height:24.10px;border-radius:1.6px;background:#c9ecd3"></div>
<div style="position:absolute;left:1088.98px;top:589.72px;width:3.20px;height:24.10px;border-radius:1.6px;background:#c9ecd3"></div>
<div style="position:absolute;left:1093.86px;top:589.72px;width:3.20px;height:24.10px;border-radius:1.6px;background:#c9ecd3"></div>
<div style="position:absolute;left:1098.74px;top:589.72px;width:3.20px;height:24.10px;border-radius:1.6px;background:#c9ecd3"></div>
<div style="position:absolute;left:1103.62px;top:589.72px;width:3.20px;height:24.10px;border-radius:1.6px;background:#c9ecd3"></div>
<div style="position:absolute;left:1108.50px;top:589.72px;width:3.20px;height:24.10px;border-radius:1.6px;background:#c9ecd3"></div>
<div style="position:absolute;left:1113.38px;top:589.72px;width:3.20px;height:24.10px;border-radius:1.6px;background:#fdf0c8"></div>
<div style="position:absolute;left:1118.26px;top:589.72px;width:3.20px;height:24.10px;border-radius:1.6px;background:#fdf0c8"></div>
<div style="position:absolute;left:1123.14px;top:589.72px;width:3.20px;height:24.10px;border-radius:1.6px;background:#fdd1d4"></div>
<div style="position:absolute;left:1128.02px;top:589.72px;width:3.20px;height:24.10px;border-radius:1.6px;background:#fdd1d4"></div>
<div class="t" style="left:1135.4px;top:594px;font-size:14.3px;color:#1a1a1a;font-weight:400;letter-spacing:-0.460px;">2.98%</div>
<div class="t" style="left:1242.7px;top:593px;font-size:17.3px;color:#1a1a1a;font-weight:400;letter-spacing:-0.264px;">4155</div>
<div class="t" style="left:1426.3px;top:584px;font-size:17.3px;color:#1a1a1a;font-weight:400;">5</div>
<div class="t" style="left:1425.9px;top:605px;font-size:14.6px;color:#878a93;font-weight:400;letter-spacing:-0.228px;">1005</div>
<div class="t" style="left:1572.6px;top:593px;font-size:17.3px;color:#1a1a1a;font-weight:400;">84</div>
<div class="t" style="left:1718.4px;top:593px;font-size:17.3px;color:#1a1a1a;font-weight:400;">46</div>
<div class="t" style="left:1854.9px;top:573px;font-size:17.3px;color:#1a1a1a;font-weight:400;">8</div>
<div class="t" style="left:1854.9px;top:594px;font-size:14.6px;color:#878a93;font-weight:400;letter-spacing:-0.228px;">1008</div>
<div class="t" style="left:2000.3px;top:593px;font-size:17.3px;color:#1a1a1a;font-weight:400;">40</div>
<div class="t" style="left:2146.8px;top:593px;font-size:17.3px;color:#1a1a1a;font-weight:400;">48</div>
<div class="t" style="left:384.3px;top:648px;font-size:17.3px;color:#1a1a1a;font-weight:400;letter-spacing:-0.512px;">Edge-core-4238</div>
<div class="t" style="left:384.3px;top:668px;font-size:14.6px;color:#878a93;font-weight:400;letter-spacing:-0.143px;">172.18.0.35</div>
<div class="t" style="left:593.7px;top:648px;font-size:17.3px;color:#1a1a1a;font-weight:400;letter-spacing:-0.400px;">Leaf</div>
<div class="t" style="left:593.7px;top:668px;font-size:14.6px;color:#878a93;font-weight:400;letter-spacing:-0.195px;">San Jose</div>
<div class="t" style="left:752.8px;top:656px;font-size:17.3px;color:#1a1a1a;font-weight:400;letter-spacing:-0.284px;">Default</div>
<div class="t" style="left:874.3px;top:648px;font-size:17.3px;color:#1a1a1a;font-weight:400;letter-spacing:-0.264px;">Accton-As9716-32D</div>
<div class="t" style="left:874.3px;top:668px;font-size:14.6px;color:#878a93;font-weight:400;letter-spacing:0.082px;">broadcom</div>
<div style="position:absolute;left:1084.10px;top:653.10px;width:3.20px;height:24.10px;border-radius:1.6px;background:#c9ecd3"></div>
<div style="position:absolute;left:1088.98px;top:653.10px;width:3.20px;height:24.10px;border-radius:1.6px;background:#c9ecd3"></div>
<div style="position:absolute;left:1093.86px;top:653.10px;width:3.20px;height:24.10px;border-radius:1.6px;background:#c9ecd3"></div>
<div style="position:absolute;left:1098.74px;top:653.10px;width:3.20px;height:24.10px;border-radius:1.6px;background:#c9ecd3"></div>
<div style="position:absolute;left:1103.62px;top:653.10px;width:3.20px;height:24.10px;border-radius:1.6px;background:#c9ecd3"></div>
<div style="position:absolute;left:1108.50px;top:653.10px;width:3.20px;height:24.10px;border-radius:1.6px;background:#c9ecd3"></div>
<div style="position:absolute;left:1113.38px;top:653.10px;width:3.20px;height:24.10px;border-radius:1.6px;background:#fdf0c8"></div>
<div style="position:absolute;left:1118.26px;top:653.10px;width:3.20px;height:24.10px;border-radius:1.6px;background:#fdf0c8"></div>
<div style="position:absolute;left:1123.14px;top:653.10px;width:3.20px;height:24.10px;border-radius:1.6px;background:#fdd1d4"></div>
<div style="position:absolute;left:1128.02px;top:653.10px;width:3.20px;height:24.10px;border-radius:1.6px;background:#fdd1d4"></div>
<div class="t" style="left:1135.4px;top:658px;font-size:14.3px;color:#1a1a1a;font-weight:400;letter-spacing:-0.460px;">2.98%</div>
<div class="t" style="left:1242.7px;top:656px;font-size:17.3px;color:#1a1a1a;font-weight:400;letter-spacing:-0.264px;">4155</div>
<div class="t" style="left:1426.3px;top:648px;font-size:17.3px;color:#1a1a1a;font-weight:400;">5</div>
<div class="t" style="left:1425.9px;top:668px;font-size:14.6px;color:#878a93;font-weight:400;letter-spacing:-0.228px;">1005</div>
<div class="t" style="left:1572.6px;top:656px;font-size:17.3px;color:#1a1a1a;font-weight:400;">91</div>
<div class="t" style="left:1718.4px;top:656px;font-size:17.3px;color:#1a1a1a;font-weight:400;">40</div>
<div class="t" style="left:1854.9px;top:637px;font-size:17.3px;color:#1a1a1a;font-weight:400;">8</div>
<div class="t" style="left:1854.9px;top:658px;font-size:14.6px;color:#878a93;font-weight:400;letter-spacing:-0.228px;">1008</div>
<div class="t" style="left:2000.3px;top:656px;font-size:17.3px;color:#1a1a1a;font-weight:400;">39</div>
<div class="t" style="left:2146.8px;top:656px;font-size:17.3px;color:#1a1a1a;font-weight:400;">45</div>
<div class="t" style="left:384.3px;top:711px;font-size:17.3px;color:#1a1a1a;font-weight:400;letter-spacing:-0.452px;">Edge-core-527</div>
<div class="t" style="left:384.3px;top:732px;font-size:14.6px;color:#878a93;font-weight:400;letter-spacing:-0.143px;">172.18.0.36</div>
<div class="t" style="left:593.7px;top:711px;font-size:17.3px;color:#1a1a1a;font-weight:400;letter-spacing:-0.400px;">Leaf</div>
<div class="t" style="left:593.7px;top:732px;font-size:14.6px;color:#878a93;font-weight:400;letter-spacing:-0.195px;">San Jose</div>
<div class="t" style="left:752.8px;top:720px;font-size:17.3px;color:#1a1a1a;font-weight:400;letter-spacing:-0.284px;">Default</div>
<div class="t" style="left:874.3px;top:711px;font-size:17.3px;color:#1a1a1a;font-weight:400;letter-spacing:-0.264px;">Accton-As9716-32D</div>
<div class="t" style="left:874.3px;top:732px;font-size:14.6px;color:#878a93;font-weight:400;letter-spacing:0.082px;">broadcom</div>
<div style="position:absolute;left:1084.10px;top:716.48px;width:3.20px;height:24.10px;border-radius:1.6px;background:#c9ecd3"></div>
<div style="position:absolute;left:1088.98px;top:716.48px;width:3.20px;height:24.10px;border-radius:1.6px;background:#c9ecd3"></div>
<div style="position:absolute;left:1093.86px;top:716.48px;width:3.20px;height:24.10px;border-radius:1.6px;background:#c9ecd3"></div>
<div style="position:absolute;left:1098.74px;top:716.48px;width:3.20px;height:24.10px;border-radius:1.6px;background:#c9ecd3"></div>
<div style="position:absolute;left:1103.62px;top:716.48px;width:3.20px;height:24.10px;border-radius:1.6px;background:#c9ecd3"></div>
<div style="position:absolute;left:1108.50px;top:716.48px;width:3.20px;height:24.10px;border-radius:1.6px;background:#c9ecd3"></div>
<div style="position:absolute;left:1113.38px;top:716.48px;width:3.20px;height:24.10px;border-radius:1.6px;background:#fdf0c8"></div>
<div style="position:absolute;left:1118.26px;top:716.48px;width:3.20px;height:24.10px;border-radius:1.6px;background:#fdf0c8"></div>
<div style="position:absolute;left:1123.14px;top:716.48px;width:3.20px;height:24.10px;border-radius:1.6px;background:#fdd1d4"></div>
<div style="position:absolute;left:1128.02px;top:716.48px;width:3.20px;height:24.10px;border-radius:1.6px;background:#fdd1d4"></div>
<div class="t" style="left:1135.4px;top:721px;font-size:14.3px;color:#1a1a1a;font-weight:400;letter-spacing:-0.460px;">2.98%</div>
<div class="t" style="left:1242.7px;top:720px;font-size:17.3px;color:#1a1a1a;font-weight:400;letter-spacing:-0.264px;">4155</div>
<div class="t" style="left:1426.3px;top:711px;font-size:17.3px;color:#1a1a1a;font-weight:400;">5</div>
<div class="t" style="left:1425.9px;top:732px;font-size:14.6px;color:#878a93;font-weight:400;letter-spacing:-0.228px;">1005</div>
<div class="t" style="left:1572.6px;top:720px;font-size:17.3px;color:#1a1a1a;font-weight:400;">81</div>
<div class="t" style="left:1718.4px;top:720px;font-size:17.3px;color:#1a1a1a;font-weight:400;">22</div>
<div class="t" style="left:1854.9px;top:700px;font-size:17.3px;color:#1a1a1a;font-weight:400;">8</div>
<div class="t" style="left:1854.9px;top:721px;font-size:14.6px;color:#878a93;font-weight:400;letter-spacing:-0.228px;">1008</div>
<div class="t" style="left:2000.3px;top:720px;font-size:17.3px;color:#1a1a1a;font-weight:400;">10</div>
<div class="t" style="left:2146.8px;top:720px;font-size:17.3px;color:#1a1a1a;font-weight:400;">18</div>
<div class="t" style="left:384.3px;top:774px;font-size:17.3px;color:#1a1a1a;font-weight:400;letter-spacing:-0.414px;">Edge-core-9116</div>
<div class="t" style="left:384.3px;top:795px;font-size:14.6px;color:#878a93;font-weight:400;letter-spacing:-0.143px;">172.18.0.37</div>
<div class="t" style="left:593.7px;top:774px;font-size:17.3px;color:#1a1a1a;font-weight:400;letter-spacing:-0.400px;">Leaf</div>
<div class="t" style="left:593.7px;top:795px;font-size:14.6px;color:#878a93;font-weight:400;letter-spacing:-0.195px;">San Jose</div>
<div class="t" style="left:752.8px;top:783px;font-size:17.3px;color:#1a1a1a;font-weight:400;letter-spacing:-0.284px;">Default</div>
<div class="t" style="left:874.3px;top:774px;font-size:17.3px;color:#1a1a1a;font-weight:400;letter-spacing:-0.264px;">Accton-As9716-32D</div>
<div class="t" style="left:874.3px;top:795px;font-size:14.6px;color:#878a93;font-weight:400;letter-spacing:0.082px;">broadcom</div>
<div style="position:absolute;left:1084.10px;top:779.86px;width:3.20px;height:24.10px;border-radius:1.6px;background:#c9ecd3"></div>
<div style="position:absolute;left:1088.98px;top:779.86px;width:3.20px;height:24.10px;border-radius:1.6px;background:#c9ecd3"></div>
<div style="position:absolute;left:1093.86px;top:779.86px;width:3.20px;height:24.10px;border-radius:1.6px;background:#c9ecd3"></div>
<div style="position:absolute;left:1098.74px;top:779.86px;width:3.20px;height:24.10px;border-radius:1.6px;background:#c9ecd3"></div>
<div style="position:absolute;left:1103.62px;top:779.86px;width:3.20px;height:24.10px;border-radius:1.6px;background:#c9ecd3"></div>
<div style="position:absolute;left:1108.50px;top:779.86px;width:3.20px;height:24.10px;border-radius:1.6px;background:#c9ecd3"></div>
<div style="position:absolute;left:1113.38px;top:779.86px;width:3.20px;height:24.10px;border-radius:1.6px;background:#fdf0c8"></div>
<div style="position:absolute;left:1118.26px;top:779.86px;width:3.20px;height:24.10px;border-radius:1.6px;background:#fdf0c8"></div>
<div style="position:absolute;left:1123.14px;top:779.86px;width:3.20px;height:24.10px;border-radius:1.6px;background:#fdd1d4"></div>
<div style="position:absolute;left:1128.02px;top:779.86px;width:3.20px;height:24.10px;border-radius:1.6px;background:#fdd1d4"></div>
<div class="t" style="left:1135.4px;top:785px;font-size:14.3px;color:#1a1a1a;font-weight:400;letter-spacing:-0.460px;">2.98%</div>
<div class="t" style="left:1242.7px;top:783px;font-size:17.3px;color:#1a1a1a;font-weight:400;letter-spacing:-0.264px;">4155</div>
<div class="t" style="left:1426.3px;top:774px;font-size:17.3px;color:#1a1a1a;font-weight:400;">5</div>
<div class="t" style="left:1425.9px;top:795px;font-size:14.6px;color:#878a93;font-weight:400;letter-spacing:-0.228px;">1005</div>
<div class="t" style="left:1572.6px;top:783px;font-size:17.3px;color:#1a1a1a;font-weight:400;">112</div>
<div class="t" style="left:1718.4px;top:783px;font-size:17.3px;color:#1a1a1a;font-weight:400;">29</div>
<div class="t" style="left:1854.9px;top:763px;font-size:17.3px;color:#1a1a1a;font-weight:400;">8</div>
<div class="t" style="left:1854.9px;top:785px;font-size:14.6px;color:#878a93;font-weight:400;letter-spacing:-0.228px;">1008</div>
<div class="t" style="left:2000.3px;top:783px;font-size:17.3px;color:#1a1a1a;font-weight:400;">47</div>
<div class="t" style="left:2146.8px;top:783px;font-size:17.3px;color:#1a1a1a;font-weight:400;">35</div>
<div class="t" style="left:384.3px;top:838px;font-size:17.3px;color:#1a1a1a;font-weight:400;letter-spacing:-0.512px;">Edge-core-4925</div>
<div class="t" style="left:384.3px;top:859px;font-size:14.6px;color:#878a93;font-weight:400;letter-spacing:-0.143px;">172.18.0.38</div>
<div class="t" style="left:593.7px;top:838px;font-size:17.3px;color:#1a1a1a;font-weight:400;letter-spacing:-0.400px;">Leaf</div>
<div class="t" style="left:593.7px;top:859px;font-size:14.6px;color:#878a93;font-weight:400;letter-spacing:-0.195px;">San Jose</div>
<div class="t" style="left:752.8px;top:847px;font-size:17.3px;color:#1a1a1a;font-weight:400;letter-spacing:-0.284px;">Default</div>
<div class="t" style="left:874.3px;top:838px;font-size:17.3px;color:#1a1a1a;font-weight:400;letter-spacing:-0.264px;">Accton-As9716-32D</div>
<div class="t" style="left:874.3px;top:859px;font-size:14.6px;color:#878a93;font-weight:400;letter-spacing:0.082px;">broadcom</div>
<div style="position:absolute;left:1084.10px;top:843.24px;width:3.20px;height:24.10px;border-radius:1.6px;background:#c9ecd3"></div>
<div style="position:absolute;left:1088.98px;top:843.24px;width:3.20px;height:24.10px;border-radius:1.6px;background:#c9ecd3"></div>
<div style="position:absolute;left:1093.86px;top:843.24px;width:3.20px;height:24.10px;border-radius:1.6px;background:#c9ecd3"></div>
<div style="position:absolute;left:1098.74px;top:843.24px;width:3.20px;height:24.10px;border-radius:1.6px;background:#c9ecd3"></div>
<div style="position:absolute;left:1103.62px;top:843.24px;width:3.20px;height:24.10px;border-radius:1.6px;background:#c9ecd3"></div>
<div style="position:absolute;left:1108.50px;top:843.24px;width:3.20px;height:24.10px;border-radius:1.6px;background:#c9ecd3"></div>
<div style="position:absolute;left:1113.38px;top:843.24px;width:3.20px;height:24.10px;border-radius:1.6px;background:#fdf0c8"></div>
<div style="position:absolute;left:1118.26px;top:843.24px;width:3.20px;height:24.10px;border-radius:1.6px;background:#fdf0c8"></div>
<div style="position:absolute;left:1123.14px;top:843.24px;width:3.20px;height:24.10px;border-radius:1.6px;background:#fdd1d4"></div>
<div style="position:absolute;left:1128.02px;top:843.24px;width:3.20px;height:24.10px;border-radius:1.6px;background:#fdd1d4"></div>
<div class="t" style="left:1135.4px;top:848px;font-size:14.3px;color:#1a1a1a;font-weight:400;letter-spacing:-0.460px;">2.98%</div>
<div class="t" style="left:1242.7px;top:847px;font-size:17.3px;color:#1a1a1a;font-weight:400;letter-spacing:-0.264px;">4155</div>
<div class="t" style="left:1426.3px;top:838px;font-size:17.3px;color:#1a1a1a;font-weight:400;">5</div>
<div class="t" style="left:1425.9px;top:859px;font-size:14.6px;color:#878a93;font-weight:400;letter-spacing:-0.228px;">1005</div>
<div class="t" style="left:1572.6px;top:847px;font-size:17.3px;color:#1a1a1a;font-weight:400;">119</div>
<div class="t" style="left:1718.4px;top:847px;font-size:17.3px;color:#1a1a1a;font-weight:400;">41</div>
<div class="t" style="left:1854.9px;top:827px;font-size:17.3px;color:#1a1a1a;font-weight:400;">8</div>
<div class="t" style="left:1854.9px;top:848px;font-size:14.6px;color:#878a93;font-weight:400;letter-spacing:-0.228px;">1008</div>
<div class="t" style="left:2000.3px;top:847px;font-size:17.3px;color:#1a1a1a;font-weight:400;">28</div>
<div class="t" style="left:2146.8px;top:847px;font-size:17.3px;color:#1a1a1a;font-weight:400;">39</div>
<div class="t" style="left:384.3px;top:901px;font-size:17.3px;color:#1a1a1a;font-weight:400;letter-spacing:-0.512px;">Edge-core-5216</div>
<div class="t" style="left:384.3px;top:922px;font-size:14.6px;color:#878a93;font-weight:400;letter-spacing:-0.143px;">172.18.0.39</div>
<div class="t" style="left:593.7px;top:901px;font-size:17.3px;color:#1a1a1a;font-weight:400;letter-spacing:-0.400px;">Leaf</div>
<div class="t" style="left:593.7px;top:922px;font-size:14.6px;color:#878a93;font-weight:400;letter-spacing:-0.195px;">San Jose</div>
<div class="t" style="left:752.8px;top:910px;font-size:17.3px;color:#1a1a1a;font-weight:400;letter-spacing:-0.284px;">Default</div>
<div class="t" style="left:874.3px;top:901px;font-size:17.3px;color:#1a1a1a;font-weight:400;letter-spacing:-0.264px;">Accton-As9716-32D</div>
<div class="t" style="left:874.3px;top:922px;font-size:14.6px;color:#878a93;font-weight:400;letter-spacing:0.082px;">broadcom</div>
<div style="position:absolute;left:1084.10px;top:906.62px;width:3.20px;height:24.10px;border-radius:1.6px;background:#c9ecd3"></div>
<div style="position:absolute;left:1088.98px;top:906.62px;width:3.20px;height:24.10px;border-radius:1.6px;background:#c9ecd3"></div>
<div style="position:absolute;left:1093.86px;top:906.62px;width:3.20px;height:24.10px;border-radius:1.6px;background:#c9ecd3"></div>
<div style="position:absolute;left:1098.74px;top:906.62px;width:3.20px;height:24.10px;border-radius:1.6px;background:#c9ecd3"></div>
<div style="position:absolute;left:1103.62px;top:906.62px;width:3.20px;height:24.10px;border-radius:1.6px;background:#c9ecd3"></div>
<div style="position:absolute;left:1108.50px;top:906.62px;width:3.20px;height:24.10px;border-radius:1.6px;background:#c9ecd3"></div>
<div style="position:absolute;left:1113.38px;top:906.62px;width:3.20px;height:24.10px;border-radius:1.6px;background:#fdf0c8"></div>
<div style="position:absolute;left:1118.26px;top:906.62px;width:3.20px;height:24.10px;border-radius:1.6px;background:#fdf0c8"></div>
<div style="position:absolute;left:1123.14px;top:906.62px;width:3.20px;height:24.10px;border-radius:1.6px;background:#fdd1d4"></div>
<div style="position:absolute;left:1128.02px;top:906.62px;width:3.20px;height:24.10px;border-radius:1.6px;background:#fdd1d4"></div>
<div class="t" style="left:1135.4px;top:911px;font-size:14.3px;color:#1a1a1a;font-weight:400;letter-spacing:-0.460px;">2.98%</div>
<div class="t" style="left:1242.7px;top:910px;font-size:17.3px;color:#1a1a1a;font-weight:400;letter-spacing:-0.264px;">4155</div>
<div class="t" style="left:1426.3px;top:901px;font-size:17.3px;color:#1a1a1a;font-weight:400;">5</div>
<div class="t" style="left:1425.9px;top:922px;font-size:14.6px;color:#878a93;font-weight:400;letter-spacing:-0.228px;">1005</div>
<div class="t" style="left:1572.6px;top:910px;font-size:17.3px;color:#1a1a1a;font-weight:400;">78</div>
<div class="t" style="left:1718.4px;top:910px;font-size:17.3px;color:#1a1a1a;font-weight:400;">20</div>
<div class="t" style="left:1854.9px;top:890px;font-size:17.3px;color:#1a1a1a;font-weight:400;">8</div>
<div class="t" style="left:1854.9px;top:911px;font-size:14.6px;color:#878a93;font-weight:400;letter-spacing:-0.228px;">1008</div>
<div class="t" style="left:2000.3px;top:910px;font-size:17.3px;color:#1a1a1a;font-weight:400;">16</div>
<div class="t" style="left:2146.8px;top:910px;font-size:17.3px;color:#1a1a1a;font-weight:400;">25</div>
<div class="t" style="left:1524.8px;top:1194px;font-size:16.4px;color:#2a2a2a;font-weight:400;letter-spacing:0.003px;">Rows per page:</div>
<div style="position:absolute;left:1650.60px;top:1179.40px;width:96.60px;height:45.00px;box-sizing:border-box;border:1px solid #e6e7ea;border-radius:7px;background:#fff;box-shadow:0 1px 2px rgba(0,0,0,0.04)"></div>
<div class="t" style="left:1666.3px;top:1195px;font-size:16.6px;color:#1a1a1a;font-weight:400;">10</div>
<svg style="position:absolute;left:1711.10px;top:1191.30px;width:22px;height:22px" viewBox="0 0 24 24" fill="none" stroke="#5f6577" stroke-width="1.75" stroke-linecap="round" stroke-linejoin="round"><path d="m6 9 6 6 6-6"/></svg>
<svg style="position:absolute;left:1769.90px;top:1193.10px;width:20px;height:20px" viewBox="0 0 24 24" fill="none" stroke="#141414" stroke-width="2.6" stroke-linecap="round" stroke-linejoin="round"><path d="m15 18-6-6 6-6"/></svg>
<div class="t" style="left:1793.6px;top:1194px;font-size:17.2px;color:#141414;font-weight:400;-webkit-text-stroke:0.4px #141414;letter-spacing:-0.304px;">Previous</div>
<div class="t" style="left:1888.81px;top:1194px;font-size:16.5px;color:#141414;font-weight:400;-webkit-text-stroke:0.3px #141414;">1</div>
<div class="t" style="left:1935.13px;top:1194px;font-size:16.5px;color:#141414;font-weight:400;-webkit-text-stroke:0.3px #141414;">2</div>
<div class="t" style="left:1981.45px;top:1194px;font-size:16.5px;color:#141414;font-weight:400;-webkit-text-stroke:0.3px #141414;">3</div>
<div class="t" style="left:2027.77px;top:1194px;font-size:16.5px;color:#141414;font-weight:400;-webkit-text-stroke:0.3px #141414;">4</div>
<div class="t" style="left:2074.09px;top:1194px;font-size:16.5px;color:#141414;font-weight:400;-webkit-text-stroke:0.3px #141414;">5</div>
<div class="t" style="left:2120.41px;top:1194px;font-size:16.5px;color:#141414;font-weight:400;-webkit-text-stroke:0.3px #141414;">6</div>
<div style="position:absolute;left:2013.80px;top:1183.30px;width:37.00px;height:37.00px;box-sizing:border-box;border:2px solid #e4e4e7;border-radius:6px"></div>
<div class="t" style="left:2159.8px;top:1194px;font-size:17.2px;color:#141414;font-weight:400;-webkit-text-stroke:0.4px #141414;letter-spacing:-0.321px;">Next</div>
<svg style="position:absolute;left:2197.00px;top:1193.10px;width:20px;height:20px" viewBox="0 0 24 24" fill="none" stroke="#141414" stroke-width="2.6" stroke-linecap="round" stroke-linejoin="round"><path d="m9 18 6-6-6-6"/></svg>
<div style="position:absolute;left:352.00px;top:1235.00px;width:1936.00px;height:1.00px;background:#e6e7eb"></div>
<div style="position:absolute;left:381.50px;top:1243.00px;width:389.10px;height:39.40px;box-sizing:border-box;border:1px solid #eceef0;border-radius:8px;background:#fff"></div>
<div style="position:absolute;left:428.90px;top:1243.50px;width:1.00px;height:38.50px;background:#eceef0"></div>
<div style="position:absolute;left:477.80px;top:1243.50px;width:1.00px;height:38.50px;background:#eceef0"></div>
<div style="position:absolute;left:526.60px;top:1243.50px;width:1.00px;height:38.50px;background:#eceef0"></div>
<div style="position:absolute;left:575.50px;top:1243.50px;width:1.00px;height:38.50px;background:#eceef0"></div>
<div style="position:absolute;left:623.90px;top:1243.50px;width:1.00px;height:38.50px;background:#eceef0"></div>
<div style="position:absolute;left:672.80px;top:1243.50px;width:1.00px;height:38.50px;background:#eceef0"></div>
<div style="position:absolute;left:721.70px;top:1243.50px;width:1.00px;height:38.50px;background:#eceef0"></div>
<div class="t" style="left:389.8px;top:1254px;font-size:17.3px;color:#141414;font-weight:400;-webkit-text-stroke:0.35px #141414;letter-spacing:-0.009px;">Live</div>
<div class="t" style="left:444.23px;top:1254px;font-size:17.3px;color:#737373;font-weight:400;">1h</div>
<div class="t" style="left:493.08px;top:1254px;font-size:17.3px;color:#737373;font-weight:400;">2h</div>
<div class="t" style="left:541.93px;top:1254px;font-size:17.3px;color:#737373;font-weight:400;">4h</div>
<div class="t" style="left:585.77px;top:1254px;font-size:17.3px;color:#737373;font-weight:400;">12h</div>
<div class="t" style="left:639.23px;top:1254px;font-size:17.3px;color:#737373;font-weight:400;">1d</div>
<div class="t" style="left:686.67px;top:1254px;font-size:17.3px;color:#737373;font-weight:400;">1w</div>
<div class="t" style="left:735.32px;top:1254px;font-size:17.3px;color:#737373;font-weight:400;">2w</div>
<div style="position:absolute;left:802.00px;top:1243.00px;width:1456.00px;height:38.80px;box-sizing:border-box;border:1.6px solid #d3cbf1;border-radius:9px;background:#e8eefb"></div>
<div class="t" style="left:813.5px;top:1265px;font-size:14.6px;color:#bdbdbd;font-weight:400;letter-spacing:-0.057px;">13:28</div>
<div class="t" style="left:1013.0px;top:1265px;font-size:14.6px;color:#bdbdbd;font-weight:400;letter-spacing:-0.057px;">13:36</div>
<div class="t" style="left:1214.0px;top:1265px;font-size:14.6px;color:#bdbdbd;font-weight:400;letter-spacing:-0.057px;">13:45</div>
<div class="t" style="left:1414.0px;top:1265px;font-size:14.6px;color:#bdbdbd;font-weight:400;letter-spacing:-0.057px;">13:54</div>
<div class="t" style="left:1615.1px;top:1265px;font-size:14.6px;color:#bdbdbd;font-weight:400;letter-spacing:-0.057px;">14:02</div>
<div class="t" style="left:1815.8px;top:1265px;font-size:14.6px;color:#bdbdbd;font-weight:400;letter-spacing:-0.562px;">14:11</div>
<div class="t" style="left:2011.2px;top:1265px;font-size:14.6px;color:#bdbdbd;font-weight:400;letter-spacing:-0.332px;">14:19</div>
<div class="t" style="left:2209.9px;top:1265px;font-size:14.6px;color:#bdbdbd;font-weight:400;letter-spacing:-0.057px;">14:28</div>
<div style="position:absolute;left:790px;top:1247px;width:23px;height:33.2px;border-radius:5px;background:#fbfbfc;box-shadow:0 1px 3px rgba(0,0,0,0.10)"><div style="position:absolute;left:7.8px;top:10.1px;width:2.3px;height:2.3px;border-radius:50%;background:#555"></div><div style="position:absolute;left:7.8px;top:15.1px;width:2.3px;height:2.3px;border-radius:50%;background:#555"></div><div style="position:absolute;left:7.8px;top:20.1px;width:2.3px;height:2.3px;border-radius:50%;background:#555"></div><div style="position:absolute;left:12.6px;top:10.1px;width:2.3px;height:2.3px;border-radius:50%;background:#555"></div><div style="position:absolute;left:12.6px;top:15.1px;width:2.3px;height:2.3px;border-radius:50%;background:#555"></div><div style="position:absolute;left:12.6px;top:20.1px;width:2.3px;height:2.3px;border-radius:50%;background:#555"></div></div>
<div style="position:absolute;left:2247px;top:1247px;width:23px;height:33.2px;border-radius:5px;background:#fbfbfc;box-shadow:0 1px 3px rgba(0,0,0,0.10)"><div style="position:absolute;left:7.8px;top:10.1px;width:2.3px;height:2.3px;border-radius:50%;background:#555"></div><div style="position:absolute;left:7.8px;top:15.1px;width:2.3px;height:2.3px;border-radius:50%;background:#555"></div><div style="position:absolute;left:7.8px;top:20.1px;width:2.3px;height:2.3px;border-radius:50%;background:#555"></div><div style="position:absolute;left:12.6px;top:10.1px;width:2.3px;height:2.3px;border-radius:50%;background:#555"></div><div style="position:absolute;left:12.6px;top:15.1px;width:2.3px;height:2.3px;border-radius:50%;background:#555"></div><div style="position:absolute;left:12.6px;top:20.1px;width:2.3px;height:2.3px;border-radius:50%;background:#555"></div></div>
</body></html>
